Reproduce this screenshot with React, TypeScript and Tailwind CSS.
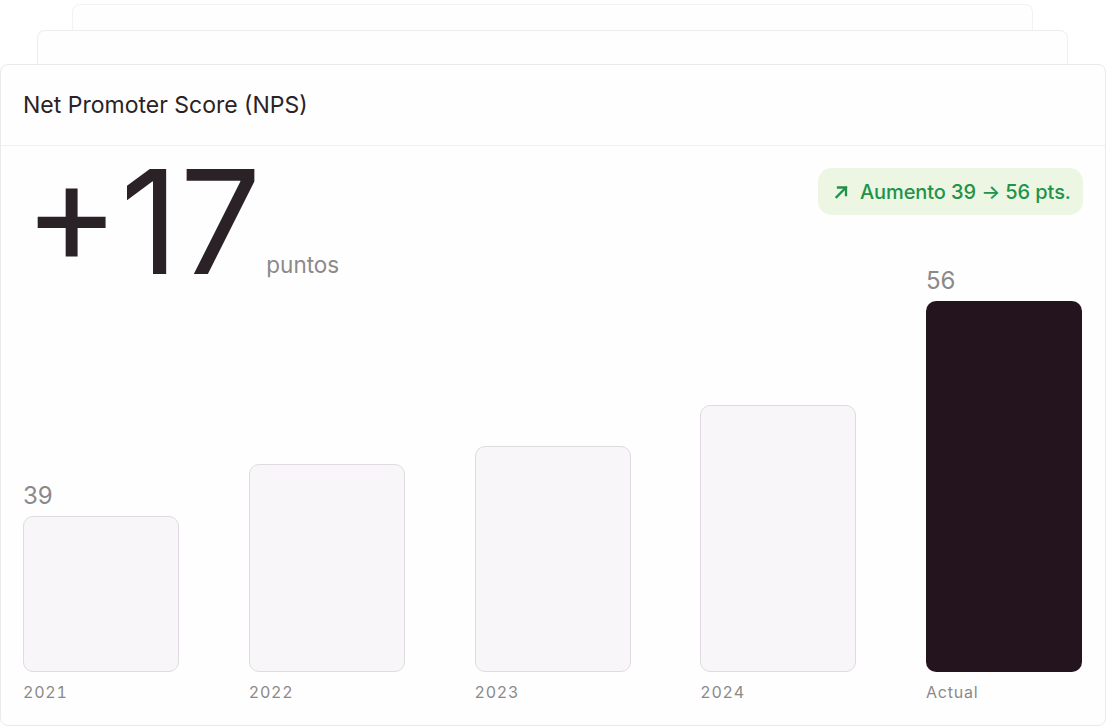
import React from "react";

const bars = [
  { year: "2021", h: 156, value: "39" },
  { year: "2022", h: 208, value: "" },
  { year: "2023", h: 226, value: "" },
  { year: "2024", h: 267, value: "" },
  { year: "Actual", h: 371, value: "56", dark: true },
];

function Bar({ year, h, value, dark }: { year: string; h: number; value: string; dark?: boolean }) {
  return (
    <div className="flex flex-col w-[156px]">
      {value && <div className="text-[24px] leading-[30px] mb-[5px] text-[#8c898b]">{value}</div>}
      <div
        style={{ height: h }}
        className={
          dark
            ? "rounded-[10px] bg-[#24141d]"
            : "rounded-[10px] bg-[#f8f6f9] border border-[#dfdbe0]"
        }
      />
      <div className="mt-[9px] text-[16px] leading-[22px] tracking-[0.8px] tabular-nums text-[#8c898b]">{year}</div>
    </div>
  );
}

export default function App() {
  return (
    <div className="w-[1106px] h-[727px] overflow-hidden bg-white flex flex-col font-['Inter',sans-serif]">
      <div className="mt-[4px] ml-[72px] mr-[73px] h-[26px] shrink-0 bg-[#fefefe] rounded-t-[8px] border border-b-0 border-[#f3f2f3]" />
      <div className="ml-[37px] mr-[38px] h-[34px] shrink-0 bg-[#fefefe] rounded-t-[8px] border border-b-0 border-[#f0eff0] border-t-[#eeedee]" />
      <div className="flex-1 mb-px bg-[#fefefe] rounded-[8px] border border-[#ebe9eb] flex flex-col min-h-0">
        <div className="h-[81px] shrink-0 flex items-center pl-[22px] border-b border-[#f1eff1]">
          <h2 className="text-[23px] font-normal text-[#2a2226]">Net Promoter Score (NPS)</h2>
        </div>
        <div className="flex-1 flex flex-col pl-[22px] pr-[23px] min-h-0">
          <div className="flex justify-between items-start h-[120px] shrink-0">
            <div className="flex items-end">
              <span className="text-[144px] leading-[122px] font-[425] tracking-[1px] text-[#2b2227] pl-[1px] mt-[15px] [font-feature-settings:'case']">+17</span>
              <span className="text-[22.5px] leading-[28px] text-[#8c898b] ml-[4px] mb-[4px]">puntos</span>
            </div>
            <div className="mt-[22px] mr-[-1px] h-[47px] w-[265px] rounded-[14px] bg-[#ecf6e3] flex items-center pl-[15px] gap-[11px] text-[20px] font-medium tracking-[-0.1px] text-[#22924a]">
              <svg width="16" height="16" viewBox="0 0 16 16" fill="none" stroke="currentColor" strokeWidth="2.3" strokeLinecap="square">
                <path d="M3.5 13 13 3.5M5 3.5h8V11" />
              </svg>
              <span>Aumento 39 → 56 pts.</span>
            </div>
          </div>
          <div className="flex-1 flex justify-between items-end pb-[22px]">
            {bars.map((b) => (
              <Bar key={b.year} {...b} />
            ))}
          </div>
        </div>
      </div>
    </div>
  );
}
